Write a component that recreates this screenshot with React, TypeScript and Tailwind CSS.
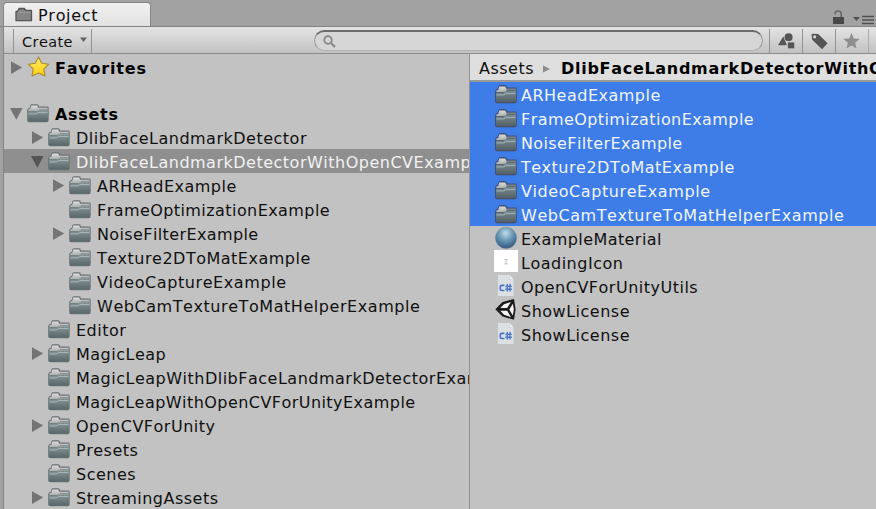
import React from "react";

type Kind = "folder" | "material" | "image" | "script" | "scene";

interface Node {
  name: string;
  depth: number;
  state?: "open" | "closed";
  selected?: boolean;
}

const tree: Node[] = [
  { name: "DlibFaceLandmarkDetector", depth: 1, state: "closed" },
  { name: "DlibFaceLandmarkDetectorWithOpenCVExample", depth: 1, state: "open", selected: true },
  { name: "ARHeadExample", depth: 2, state: "closed" },
  { name: "FrameOptimizationExample", depth: 2 },
  { name: "NoiseFilterExample", depth: 2, state: "closed" },
  { name: "Texture2DToMatExample", depth: 2 },
  { name: "VideoCaptureExample", depth: 2 },
  { name: "WebCamTextureToMatHelperExample", depth: 2 },
  { name: "Editor", depth: 1 },
  { name: "MagicLeap", depth: 1, state: "closed" },
  { name: "MagicLeapWithDlibFaceLandmarkDetectorExample", depth: 1 },
  { name: "MagicLeapWithOpenCVForUnityExample", depth: 1 },
  { name: "OpenCVForUnity", depth: 1, state: "closed" },
  { name: "Presets", depth: 1 },
  { name: "Scenes", depth: 1 },
  { name: "StreamingAssets", depth: 1, state: "closed" },
];

const files: { name: string; kind: Kind; selected?: boolean }[] = [
  { name: "ARHeadExample", kind: "folder", selected: true },
  { name: "FrameOptimizationExample", kind: "folder", selected: true },
  { name: "NoiseFilterExample", kind: "folder", selected: true },
  { name: "Texture2DToMatExample", kind: "folder", selected: true },
  { name: "VideoCaptureExample", kind: "folder", selected: true },
  { name: "WebCamTextureToMatHelperExample", kind: "folder", selected: true },
  { name: "ExampleMaterial", kind: "material" },
  { name: "LoadingIcon", kind: "image" },
  { name: "OpenCVForUnityUtils", kind: "script" },
  { name: "ShowLicense", kind: "scene" },
  { name: "ShowLicense", kind: "script" },
];

// Letter spacing for names whose width differs from the default tracking.
const tracking: Record<string, string> = {
  FrameOptimizationExample: "tracking-[.43px]",
  NoiseFilterExample: "tracking-[.39px]",
  VideoCaptureExample: "tracking-[.58px]",
  WebCamTextureToMatHelperExample: "tracking-[.56px]",
  MagicLeapWithOpenCVForUnityExample: "tracking-[.45px]",
  ExampleMaterial: "tracking-[.43px]",
};

function Defs() {
  return (
    <svg className="absolute h-0 w-0">
      <defs>
        <linearGradient id="folder" x1="0" y1="0" x2="0" y2="1">
          <stop offset="0" stopColor="#879596" />
          <stop offset="1" stopColor="#57676a" />
        </linearGradient>
        <linearGradient id="folderDark" x1="0" y1="0" x2="0" y2="1">
          <stop offset="0" stopColor="#7a8890" />
          <stop offset="1" stopColor="#505e66" />
        </linearGradient>
        <linearGradient id="flap" x1="0" y1="0" x2="0" y2="1">
          <stop offset="0" stopColor="#e0e0e0" />
          <stop offset="1" stopColor="#aaaeae" />
        </linearGradient>
        <linearGradient id="gold" x1="0" y1="0" x2="0" y2="1">
          <stop offset="0" stopColor="#ffec72" />
          <stop offset="1" stopColor="#ffcd05" />
        </linearGradient>
        <radialGradient id="ball" cx="0.48" cy="0.28" r="0.7">
          <stop offset="0" stopColor="#c4dce8" />
          <stop offset="0.45" stopColor="#6f9dba" />
          <stop offset="1" stopColor="#315a80" />
        </radialGradient>
      </defs>
    </svg>
  );
}

function Folder({ dark }: { dark?: boolean }) {
  return (
    <svg className="h-6 w-6 shrink-0" viewBox="0 0 24 24">
      <path d="M2 7.5 3.6 7 4.5 4.2Q4.8 3.3 5.8 3.3H11.3Q12.3 3.3 12.6 4.2L13 5.5H21.3Q22.7 5.5 22.7 6.8V19Q22.7 21.3 20.7 21.3H3.1Q1.2 21.3 1.2 19.3V9Z" fill={dark ? "#3c4a62" : "#6a7273"} />
      <path d="M2.4 8.3 4.2 8 5.4 4.4H11.2L12.2 6.7H21.6V10H2.4Z" fill="url(#flap)" />
      {dark && <path d="M12.6 6.9H21.6V10H11Z" fill="#7d888f" />}
      <path d="M13 8.4H21.7" stroke={dark ? "#4f5b66" : "#7c8586"} strokeWidth=".8" />
      <path d="M2 10.6H9.4L11.8 9.3H22V19Q22 20.5 20.4 20.5H3.7Q2 20.5 2 19Z" fill={dark ? "url(#folderDark)" : "url(#folder)"} />
      <path d="M2.5 12.9H9.6L12 11.6H21.5" fill="none" stroke="#a6b9bd" strokeWidth="1" />
    </svg>
  );
}

function FileIcon({ kind }: { kind: Kind }) {
  if (kind === "folder") return <Folder dark />;
  if (kind === "material")
    return (
      <svg className="h-6 w-6 shrink-0" viewBox="0 0 24 24">
        <circle cx="12.1" cy="11.9" r="10.6" fill="url(#ball)" stroke="#6c8598" strokeWidth=".5" />
      </svg>
    );
  if (kind === "image")
    return (
      <svg className="h-6 w-6 shrink-0" viewBox="0 0 24 24">
        <path d="M0 0H24V22H0Z" fill="#fff" />
        <path d="M10.3 9.5H13.8M10.3 13.8H13.8M12 9.5V14" stroke="#c4c4c4" strokeWidth="1" />
      </svg>
    );
  if (kind === "script")
    return (
      <svg className="h-6 w-6 shrink-0" viewBox="0 0 24 24">
        <path d="M4 1H15.5L19.5 5.5V22H4Z" fill="#dce0e4" />
        <path d="M15.5 1V5.5H19.5" fill="#f0f2f3" stroke="#c2c9cf" strokeWidth=".5" />
        <path d="M10.4 11.3H7.8Q6.3 11.3 6.3 12.7V15.1Q6.3 16.5 7.8 16.5H10.4" fill="none" stroke="#4874c5" strokeWidth="1.7" />
        <path d="M13.2 10V17.6M16 10V17.6M11.4 12.4H17.8M11.4 15.2H17.8" stroke="#4874c5" strokeWidth="1.4" />
      </svg>
    );
  return (
    <svg className="h-6 w-6 shrink-0" viewBox="0 0 24 24">
      <path d="M1.3 11.3 8.5 4 20 0.9 21.6 11.3 20 21.8 8.5 18.5Z" fill="#1b1b1b" />
      <path d="M10 6.3 17 4 13.1 9.9H6.3ZM18.8 5.7 19.9 11.2 18.8 17.5 15.3 11.4ZM6.3 12.8H13.2L17 19.2 10 16.7Z" fill="#f4f4f4" />
    </svg>
  );
}

function Arrow({ state, dark }: { state?: "open" | "closed"; dark?: boolean }) {
  return (
    <svg className="h-6 w-[13px] shrink-0" viewBox="0 0 13 24">
      {state === "closed" && <path d="M1 6.2V19L12.2 12.6Z" fill="#747474" />}
      {state === "open" && <path d="M0 7H12.6L6.3 18.8Z" fill={dark ? "#555" : "#747474"} />}
    </svg>
  );
}

function Toolbar() {
  return (
    <div className="flex h-[27px] shrink-0 border-b border-[#8c8c8c] bg-linear-to-b from-[#e4e4e4] to-[#c2c2c2]">
      <div className="mt-0.5 ml-[9px] flex w-[79px] items-center border-x border-[#929292] pl-2">
        <span className="pt-0.5 text-[14.5px] leading-6 tracking-[.4px]">Create</span>
        <svg className="mb-0.5 ml-[7px] h-1.5 w-[7px]" viewBox="0 0 7 6">
          <path d="M0 .5H7L3.5 5Z" fill="#626262" />
        </svg>
      </div>
      <div className="mt-[3px] ml-[222px] flex h-[21px] w-[450px] items-center rounded-full border border-t-2 border-[#999] border-t-[#6b6b6b] border-b-[#b2b2b2] bg-[#d6d6d6] pl-2">
        <svg className="h-[13px] w-[13px]" viewBox="0 0 13 13" fill="none" stroke="#858585" strokeWidth="1.7">
          <circle cx="5" cy="5" r="3.8" />
          <path d="m8 8 4 4" strokeWidth="2" />
        </svg>
      </div>
      <div className="mt-0.5 ml-[6px] flex">
        <div className="flex w-[33px] items-center justify-center border-l border-[#929292]">
          <svg className="h-[17px] w-[17px]" viewBox="0 0 17 17" fill="#555">
            <circle cx="10.6" cy="4.2" r="4" />
            <path d="M0 12.2 5.3 3.5 9 12.2Z" />
            <path d="M9.5 9H16.7V15.8H9.5Z" stroke="#d0d0d0" strokeWidth=".8" />
          </svg>
        </div>
        <div className="flex w-[33px] items-center justify-center border-l border-[#929292]">
          <svg className="h-[17px] w-[17px]" viewBox="0 0 17 17">
            <path fillRule="evenodd" d="M.5 2Q.5 .7 2 .7L7.2 1 16.6 10.2 11 16.3 1.2 6.8ZM3.7 2.2A1.6 1.6 0 1 0 3.7 5.4 1.6 1.6 0 1 0 3.7 2.2Z" fill="#555" />
          </svg>
        </div>
        <div className="flex w-[33px] items-center justify-center border-l border-[#929292]">
          <svg className="mr-0.5 h-4 w-[17px]" viewBox="0 0 17 16">
            <path d="M8.5 0 10.7 5.4 16.7 5.9 12.1 9.8 13.5 15.6 8.5 12.5 3.5 15.6 4.9 9.8 .3 5.9 6.3 5.4Z" fill="#8e8e8e" />
          </svg>
        </div>
        <div className="w-2 border-l border-[#aaa]" />
      </div>
    </div>
  );
}

export default function App() {
  return (
    <div className="flex h-[509px] w-[876px] flex-col overflow-hidden bg-[#a2a2a2] font-['DejaVu_Sans',sans-serif] text-[16px] tracking-[.5px] whitespace-nowrap text-[#101010] [font-kerning:none]">
      <Defs />
      <header className="flex h-[27px] shrink-0 items-end justify-between border-b border-[#828282] pl-[3px]">
        <div className="flex h-6 w-[148px] items-center rounded-t border border-b-0 border-[#858585] bg-linear-to-b from-[#f0f0f0] to-[#e2e2e2] pl-[11px]">
          <svg className="h-[15px] w-[18px]" viewBox="0 0 18 15">
            <path d="M1 4.5H2.5L4 1.5H9.3L10.8 3.5H16.5V13.7H1Z" fill="#858585" stroke="#555" strokeWidth="1.3" strokeLinejoin="round" />
            <path d="M3 5.2H15.5" stroke="#a0a0a0" />
          </svg>
          <span className="ml-[5px] pt-0.5 leading-5 tracking-[.7px]">Project</span>
        </div>
        <div className="flex items-end gap-[9px] pr-[2px] pb-px">
          <svg className="h-[15px] w-[11px]" viewBox="0 0 11 15">
            <path d="M2.2 4.5V3.8Q2.2 1 5 1 8.2 1 8.2 4V8" fill="none" stroke="#666" strokeWidth="1.5" />
            <path d="M0 7H11V14H0Z" fill="#484848" />
          </svg>
          <svg className="h-[11px] w-[21px]" viewBox="0 0 21 11">
            <path d="M0 3H7L3.5 7Z" fill="#505050" />
            <path d="M9 2.5H21M9 6H21M9 9.5H21" stroke="#505050" strokeWidth="1.4" />
          </svg>
        </div>
      </header>
      <div className="ml-[3px] flex min-h-0 grow flex-col border-l border-[#858585] bg-[#c2c2c2]">
        <Toolbar />
        <main className="flex min-h-0 grow">
          <aside className="w-[465px] shrink-0 overflow-hidden">
            <div className="flex h-[26px] items-center pl-[6px] font-bold text-black">
              <Arrow state="closed" />
              <svg className="ml-[4px] h-6 w-6" viewBox="0 0 24 24">
                <path d="M11.5 1.9 14.7 8.2 21.7 9.2 16.8 14.2 18 21.1 11.5 18 5 21.1 6.2 14.2 1.3 9.2 8.3 8.2Z" fill="url(#gold)" stroke="#a78b32" strokeWidth="1.1" strokeLinejoin="round" />
              </svg>
              <span className="ml-[4px] pt-[3px] leading-[21px] tracking-[.8px]">Favorites</span>
            </div>
            <div className="mt-[21px] flex h-6 items-center pl-[6px] font-bold text-black">
              <Arrow state="open" />
              <span className="ml-[3px] flex"><Folder /></span>
              <span className="ml-[5px] pt-[3px] leading-[21px] tracking-[.7px]">Assets</span>
            </div>
            {tree.map((n) => (
              <div
                key={n.name}
                className={`flex h-6 items-center ${n.depth === 1 ? "pl-[27px]" : "pl-[48px]"} ${n.selected ? "bg-[#8f8f8f] text-[#f2f2f2]" : ""}`}
              >
                <Arrow state={n.state} dark={n.selected} />
                <span className="ml-[3px] flex"><Folder /></span>
                <span className={`ml-[5px] pt-[3px] leading-[21px] ${tracking[n.name] ?? ""}`}>{n.name}</span>
              </div>
            ))}
          </aside>
          <section className="min-w-0 grow overflow-hidden border-l border-[#929292]">
            <div className="flex h-7 items-center overflow-hidden border-b-2 border-[#999] bg-[#dedede] pl-[9px]">
              <span className="pt-[3px] leading-[23px]">Assets</span>
              <svg className="mt-1 ml-[9px] h-2 w-[7px] shrink-0" viewBox="0 0 7 8">
                <path d="M0 .5V7.5L7 4Z" fill="#8b8b8b" />
              </svg>
              <span className="ml-[11px] pt-[3px] leading-[23px] font-bold tracking-[.7px] text-black">DlibFaceLandmarkDetectorWithOpenCVExample</span>
            </div>
            {files.map((f) => (
              <div
                key={f.name + f.kind}
                className={`flex h-6 items-center pl-[24px] ${f.selected ? "bg-[#3e7de7] text-[#f1f5ff]" : ""}`}
              >
                <FileIcon kind={f.kind} />
                <span className={`ml-[3px] pt-1 leading-5 ${tracking[f.name] ?? ""}`}>{f.name}</span>
              </div>
            ))}
          </section>
        </main>
      </div>
    </div>
  );
}
